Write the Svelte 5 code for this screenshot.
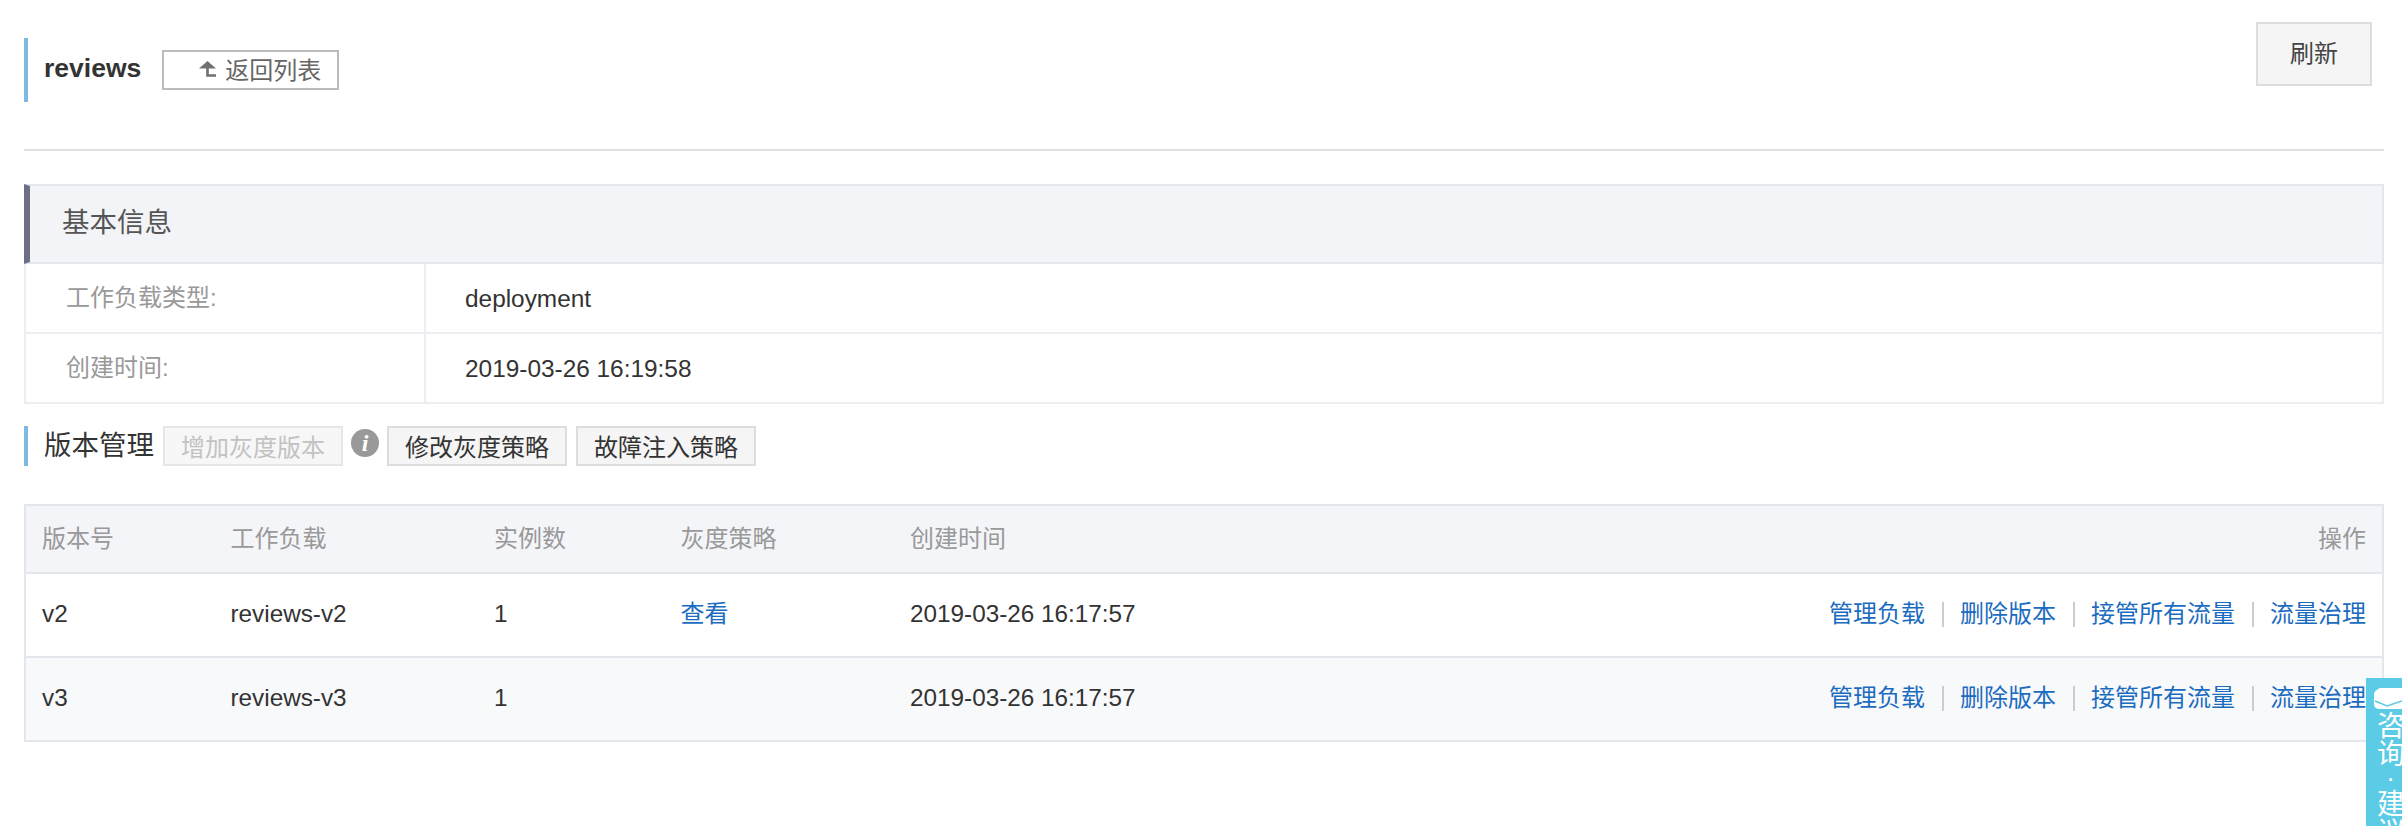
<script>
  const info = [
    { label: "工作负载类型:", value: "deployment" },
    { label: "创建时间:", value: "2019-03-26 16:19:58" },
  ];
  const versions = [
    { name: "v2", workload: "reviews-v2", count: 1, policy: "查看", time: "2019-03-26 16:17:57" },
    { name: "v3", workload: "reviews-v3", count: 1, policy: "", time: "2019-03-26 16:17:57" },
  ];
  const actions = ["管理负载", "删除版本", "接管所有流量", "流量治理"];
</script>

<div class="page">
  <div class="head">
    <div class="title-bar">
      <span class="title">reviews</span>
      <button class="back">
        <svg width="18" height="16" viewBox="0 0 18 16">
          <path d="M8.5 0 17 7.5H0z" fill="#707070" />
          <path d="M8.5 7V14.5H17" fill="none" stroke="#707070" stroke-width="2.6" />
        </svg>
        返回列表
      </button>
    </div>
    <button class="btn refresh">刷新</button>
  </div>

  <div class="panel">
    <div class="panel-head">基本信息</div>
    {#each info as item}
      <div class="info-row">
        <div class="info-label">{item.label}</div>
        <div class="info-value">{item.value}</div>
      </div>
    {/each}
  </div>

  <div class="version-bar">
    <span class="version-title">版本管理</span>
    <button class="btn small disabled">增加灰度版本</button>
    <svg class="info-icon" width="28" height="28" viewBox="0 0 28 28">
      <circle cx="14" cy="14" r="14" fill="#999" />
      <text x="14" y="22" text-anchor="middle" class="info-i">i</text>
    </svg>
    <button class="btn small">修改灰度策略</button>
    <button class="btn small">故障注入策略</button>
  </div>

  <div class="tbl">
    <div class="row thead">
      <span>版本号</span>
      <span>工作负载</span>
      <span>实例数</span>
      <span>灰度策略</span>
      <span>创建时间</span>
      <span class="ops">操作</span>
    </div>
    {#each versions as v}
      <div class="row">
        <span class="latin">{v.name}</span>
        <span class="latin">{v.workload}</span>
        <span class="latin">{v.count}</span>
        <span class="link">{v.policy}</span>
        <span class="latin">{v.time}</span>
        <span class="ops">
          {#each actions as a, i}
            {#if i > 0}<i class="sep"></i>{/if}
            <span class="link">{a}</span>
          {/each}
        </span>
      </div>
    {/each}
  </div>

  <div class="consult">
    <svg width="30" height="21" viewBox="0 0 30 21">
      <path d="M6 0H30V21H6Q0 21 0 16V6Q0 3 6 0Z" fill="#fff" />
      <path d="M1 13 13 18 28 13" fill="none" stroke="#5bcbe6" stroke-width="1.6" />
    </svg>
    <div class="consult-text">
      <span>咨询</span>
      <span class="dot">·</span>
      <span>建议</span>
    </div>
  </div>
</div>

<style>
  :global(body) {
    margin: 0;
    background: #fff;
  }
  .page {
    position: relative;
    box-sizing: border-box;
    height: 826px;
    padding: 22px 18px 0 24px;
    overflow: hidden;
    font-family: "Liberation Sans", "Noto Sans CJK SC", sans-serif;
    font-size: 24px;
    color: #333;
  }
  button {
    font-family: inherit;
    box-sizing: border-box;
    padding: 0;
  }
  .head {
    display: flex;
    justify-content: space-between;
    align-items: flex-start;
    height: 127px;
    border-bottom: 2px solid #e0e0e0;
  }
  .title-bar {
    display: flex;
    align-items: center;
    height: 64px;
    margin-top: 16px;
    padding-left: 16px;
    border-left: 4px solid #7fb8e0;
  }
  .title {
    padding-bottom: 3px;
    font-size: 26.5px;
    font-weight: bold;
    color: #333;
  }
  .back {
    display: flex;
    align-items: center;
    justify-content: flex-end;
    gap: 8px;
    width: 177px;
    height: 40px;
    margin-left: 21px;
    padding: 0 16px 3px 0;
    background: #fff;
    border: 2px solid #bbb;
    font-size: 24px;
    color: #666;
  }
  .btn {
    padding-bottom: 6px;
    background: #f5f5f5;
    border: 2px solid #ddd;
    color: #444;
    font-size: 24px;
  }
  .refresh {
    width: 116px;
    height: 64px;
    margin-right: 12px;
  }
  .small {
    width: 180px;
    height: 40px;
    padding-bottom: 8px;
    color: #333;
  }
  .disabled {
    background: #f7f7f7;
    border-color: #e6e6e6;
    color: #c2c2c2;
    margin-left: 9px;
  }
  .panel {
    margin-top: 33px;
    border: 2px solid #eceef2;
    border-top: 0;
  }
  .panel-head {
    box-sizing: border-box;
    display: flex;
    align-items: center;
    height: 80px;
    margin: 0 -2px;
    padding: 0 0 8px 32px;
    background: #f3f4f8;
    border: 2px solid #e3e6ec;
    border-left: 6px solid #6f6f82;
    font-size: 27.5px;
    color: #555;
  }
  .info-row {
    display: grid;
    grid-template-columns: 400px 1fr;
    height: 70px;
    line-height: 68px;
    box-sizing: border-box;
    border-bottom: 2px solid #eceef2;
  }
  .info-row:last-child {
    border-bottom: 0;
    height: 68px;
  }
  .info-label {
    padding-left: 40px;
    color: #999;
    border-right: 2px solid #eceef2;
  }
  .info-value {
    padding: 1px 0 0 39px;
    font-size: 24.4px;
    color: #333;
  }
  .version-bar {
    display: flex;
    align-items: center;
    height: 40px;
    margin-top: 22px;
    padding-left: 16px;
    border-left: 4px solid #7fb8e0;
  }
  .version-title {
    padding-bottom: 7px;
    font-size: 27.5px;
    color: #333;
  }
  .info-icon {
    margin: -6px 8px 0 8px;
  }
  .info-i {
    font-family: "Liberation Serif", serif;
    font-style: italic;
    font-weight: bold;
    font-size: 24px;
    fill: #fff;
  }
  .version-bar .btn + .btn {
    margin-left: 9px;
  }
  .tbl {
    margin-top: 38px;
    border: 2px solid #e3e6ec;
    border-bottom: 0;
  }
  .row {
    display: grid;
    grid-template-columns: 188.5px 263.5px 186.5px 229.5px 1fr auto;
    align-items: center;
    box-sizing: border-box;
    height: 84px;
    padding: 0 16px 2px;
    border-bottom: 2px solid #e3e6ec;
    color: #333;
  }
  .row:nth-child(3) {
    background: #f8f9fb;
  }
  .latin {
    font-size: 24.3px;
  }
  .thead {
    height: 68px;
    padding-bottom: 6px;
    background: #f4f5f9;
    color: #999;
  }
  .ops {
    display: flex;
    align-items: center;
  }
  .link {
    padding-bottom: 6px;
    color: #1b6cc0;
  }
  .sep {
    width: 2px;
    height: 25px;
    margin: 0 16.5px 0;
    background: #ccc;
  }
  .consult {
    position: absolute;
    top: 678px;
    right: 0;
    box-sizing: border-box;
    width: 36px;
    height: 148px;
    padding: 10px 0 0 8px;
    background: #5ccbe5;
    overflow: hidden;
  }
  .consult svg {
    display: block;
  }
  .consult-text {
    display: flex;
    flex-direction: column;
    width: 28px;
    margin: 4px 0 0 3px;
    font-size: 28px;
    line-height: 28px;
    color: #fff;
  }
  .consult-text span {
    width: 28px;
  }
  .consult-text .dot {
    height: 18px;
    margin: 2px 0;
    font-size: 18px;
    font-weight: bold;
    line-height: 18px;
    text-align: center;
  }
</style>
